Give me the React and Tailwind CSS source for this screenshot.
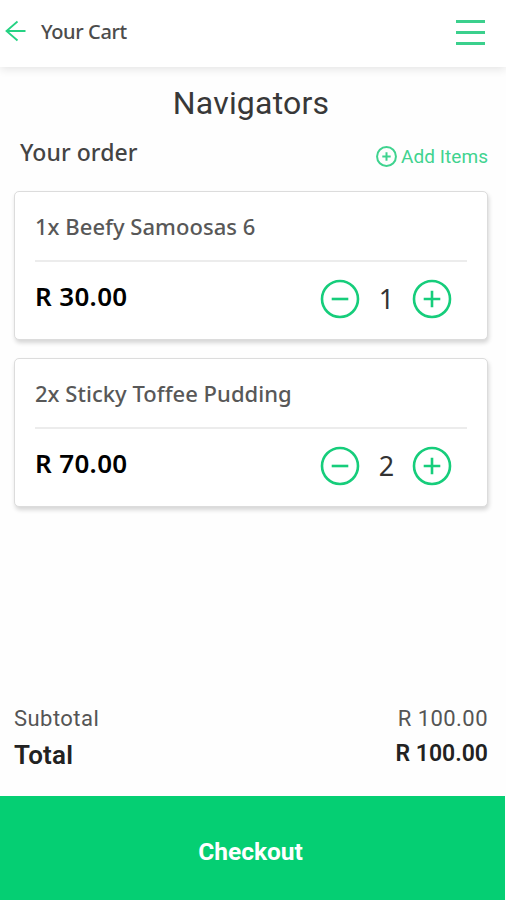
import { useState } from "react";

const green = "#25d283";

function CirclePlus({ size, stroke, arm }) {
  return (
    <svg width={size} height={size} viewBox="0 0 40 40" fill="none" stroke="currentColor" strokeWidth={stroke}>
      <circle cx="20" cy="20" r="18" />
      <path d={`M${20 - arm} 20h${arm * 2}M20 ${20 - arm}v${arm * 2}`} />
    </svg>
  );
}

function CircleMinus() {
  return (
    <svg width="40" height="40" viewBox="0 0 40 40" fill="none" stroke="currentColor" strokeWidth="2.6">
      <circle cx="20" cy="20" r="18" />
      <path d="M11.7 20h16.6" />
    </svg>
  );
}

function Header() {
  return (
    <header className="flex h-[67px] items-start justify-between bg-white pl-[5px] pr-[21px] shadow-[0_2px_9px_rgba(0,0,0,0.11)]">
      <div className="flex">
        <svg className="mt-5" width="22" height="22" viewBox="0 0 22 22" fill="none" stroke={green} strokeWidth="1.8">
          <path d="M20.500 11H1.500M12.500 1.500L1.500 11l11 9.500" />
        </svg>
        <h1 className="ml-[14px] mt-[18px] text-[20px] leading-7 font-medium tracking-[-0.4px] text-[#4c4c4c]">Your Cart</h1>
      </div>
      <button className="mt-[20px] flex flex-col gap-[8px]" aria-label="Menu">
        <span className="h-[3px] w-[29px] bg-[#3bd08d]" />
        <span className="h-[3px] w-[29px] bg-[#3bd08d]" />
        <span className="h-[3px] w-[29px] bg-[#3bd08d]" />
      </button>
    </header>
  );
}

function CartItem({ item, onChange }) {
  return (
    <div className="h-[149px] rounded-[5px] border border-[#dcdcdc] bg-white px-5 shadow-[1px_3px_4px_rgba(0,0,0,0.16)]">
      <div className="flex h-[70px] items-center border-b-2 border-[#ececec] pt-[1px] text-[22px] font-medium tracking-[0.03px] text-[#585858]">
        {item.label}
      </div>
      <div className="flex h-[73px] items-center justify-between pr-[15px]">
        <div className="-mt-[4px] text-[26px] font-semibold tracking-[0.35px] text-black">{item.price}</div>
        <div className="flex items-center text-[#16cd7b]">
          <button aria-label="Remove one" onClick={() => onChange(-1)}><CircleMinus /></button>
          <span className="w-[52px] pl-px text-center text-[27px] leading-10 text-[#333]">{item.qty}</span>
          <button aria-label="Add one" onClick={() => onChange(1)}><CirclePlus size={40} stroke={2.6} arm={8.3} /></button>
        </div>
      </div>
    </div>
  );
}

export default function App() {
  var [items, setItems] = useState([
    { label: "1x Beefy Samoosas 6", price: "R 30.00", qty: 1 },
    { label: "2x Sticky Toffee Pudding", price: "R 70.00", qty: 2 },
  ]);

  function changeQty(index, amount) {
    setItems(items.map((item, i) => (i === index ? { ...item, qty: Math.max(0, item.qty + amount) } : item)));
  }

  return (
    <div className="flex h-[900px] w-[506px] flex-col overflow-hidden bg-[#fefefe] font-['Noto_Sans',sans-serif]">
      <Header />

      <h2 className="mt-[16px] pr-[4px] text-center font-['Roboto'] text-[32px] leading-10 tracking-[0.2px] text-[#383838]">
        Navigators
      </h2>

      <div className="flex h-[68px] items-start justify-between pl-5 pr-[18px]">
        <h3 className="mt-[11px] text-[23px] leading-9 font-medium tracking-[0.05px] text-[#444]">Your order</h3>
        <button className="mt-[21px] flex items-center gap-1 font-['Roboto'] text-[19px] leading-6 text-[#3fd38f]">
          <CirclePlus size={21} stroke={3.8} arm={8} />
          <span className="pt-px tracking-[0.05px]">Add Items</span>
        </button>
      </div>

      <div className="flex flex-col gap-[18px] pl-[14px] pr-[18px]">
        {items.map((item, index) => (
          <CartItem key={item.label} item={item} onChange={(n) => changeQty(index, n)} />
        ))}
      </div>

      <div className="mt-auto pl-[14px] pr-[18px] pb-[24px] font-['Roboto']">
        <div className="flex h-[34px] items-center justify-between text-[22px] tracking-[0.45px] text-[#555]">
          <span>Subtotal</span>
          <span>R 100.00</span>
        </div>
        <div className="flex h-[37px] items-center justify-between text-[#222]">
          <span className="pt-[4px] text-[26px] font-semibold tracking-[0.2px]">Total</span>
          <span className="pt-px text-[23px] font-semibold">R 100.00</span>
        </div>
      </div>

      <button className="mr-px h-[104px] shrink-0 bg-[#05cf73] pt-[8px] pr-[4px] font-['Roboto'] text-[24.500px] font-bold text-white">
        Checkout
      </button>
    </div>
  );
}
